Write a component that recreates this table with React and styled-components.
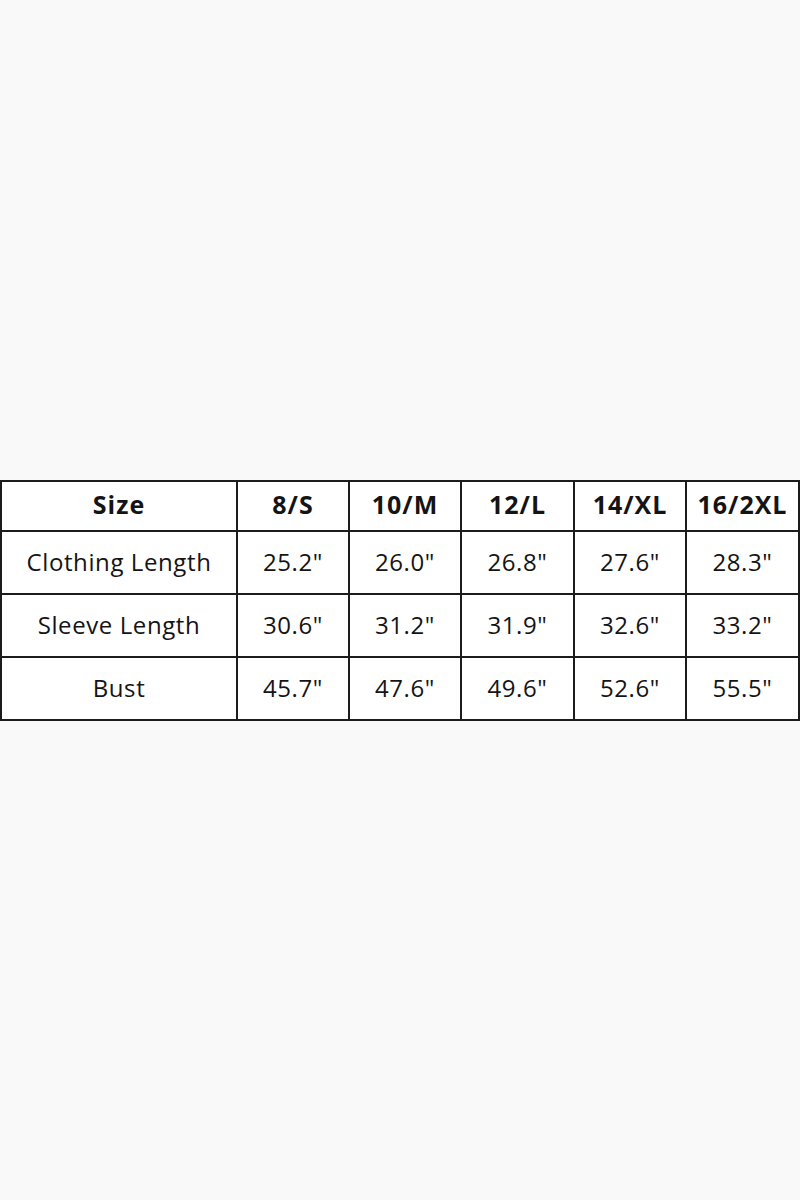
import React from 'react'
import styled, { createGlobalStyle } from 'styled-components'

const GlobalStyle = createGlobalStyle`
  html, body {
    margin: 0;
    padding: 0;
    background: #f9f9f9;
  }
`

const sizes = ['8/S', '10/M', '12/L', '14/XL', '16/2XL']
const colWidths = [236, 112, 112, 113, 112, 113]

const rows = [
  { label: 'Clothing Length', values: ['25.2"', '26.0"', '26.8"', '27.6"', '28.3"'] },
  { label: 'Sleeve Length', values: ['30.6"', '31.2"', '31.9"', '32.6"', '33.2"'] },
  { label: 'Bust', values: ['45.7"', '47.6"', '49.6"', '52.6"', '55.5"'] },
]

const Page = styled.div`
  width: 800px;
  height: 1200px;
  display: flex;
  align-items: center;
  justify-content: center;
  background: #f9f9f9;
`

const Table = styled.table`
  width: 798px;
  border-collapse: collapse;
  table-layout: fixed;
  background: #fff;
  font-family: "Open Sans", "Noto Sans", sans-serif;
  color: #141414;
`

const Col = styled.col`
  width: ${p => p.$w}px;
`

const HeadCell = styled.th`
  border: 2px solid #1c1c1c;
  text-align: center;
  padding: 0 0 3px;
  height: 45px;
  font-size: 25px;
  font-weight: 700;
  letter-spacing: 1px;
  white-space: nowrap;
`

const Cell = styled.td`
  border: 2px solid #1c1c1c;
  text-align: center;
  padding: 0 0 2px;
  height: 59px;
  font-size: 24px;
  font-weight: 400;
  letter-spacing: 0.6px;
  white-space: nowrap;
`

export default function App() {
  return (
    <>
      <GlobalStyle />
      <Page>
        <Table>
          <colgroup>
            {colWidths.map((w, i) => (
              <Col key={i} $w={w} />
            ))}
          </colgroup>
          <tbody>
            <tr>
              <HeadCell>Size</HeadCell>
              {sizes.map(s => (
                <HeadCell key={s}>{s}</HeadCell>
              ))}
            </tr>
            {rows.map(r => (
              <tr key={r.label}>
                <Cell>{r.label}</Cell>
                {r.values.map((v, i) => (
                  <Cell key={i}>{v}</Cell>
                ))}
              </tr>
            ))}
          </tbody>
        </Table>
      </Page>
    </>
  )
}
